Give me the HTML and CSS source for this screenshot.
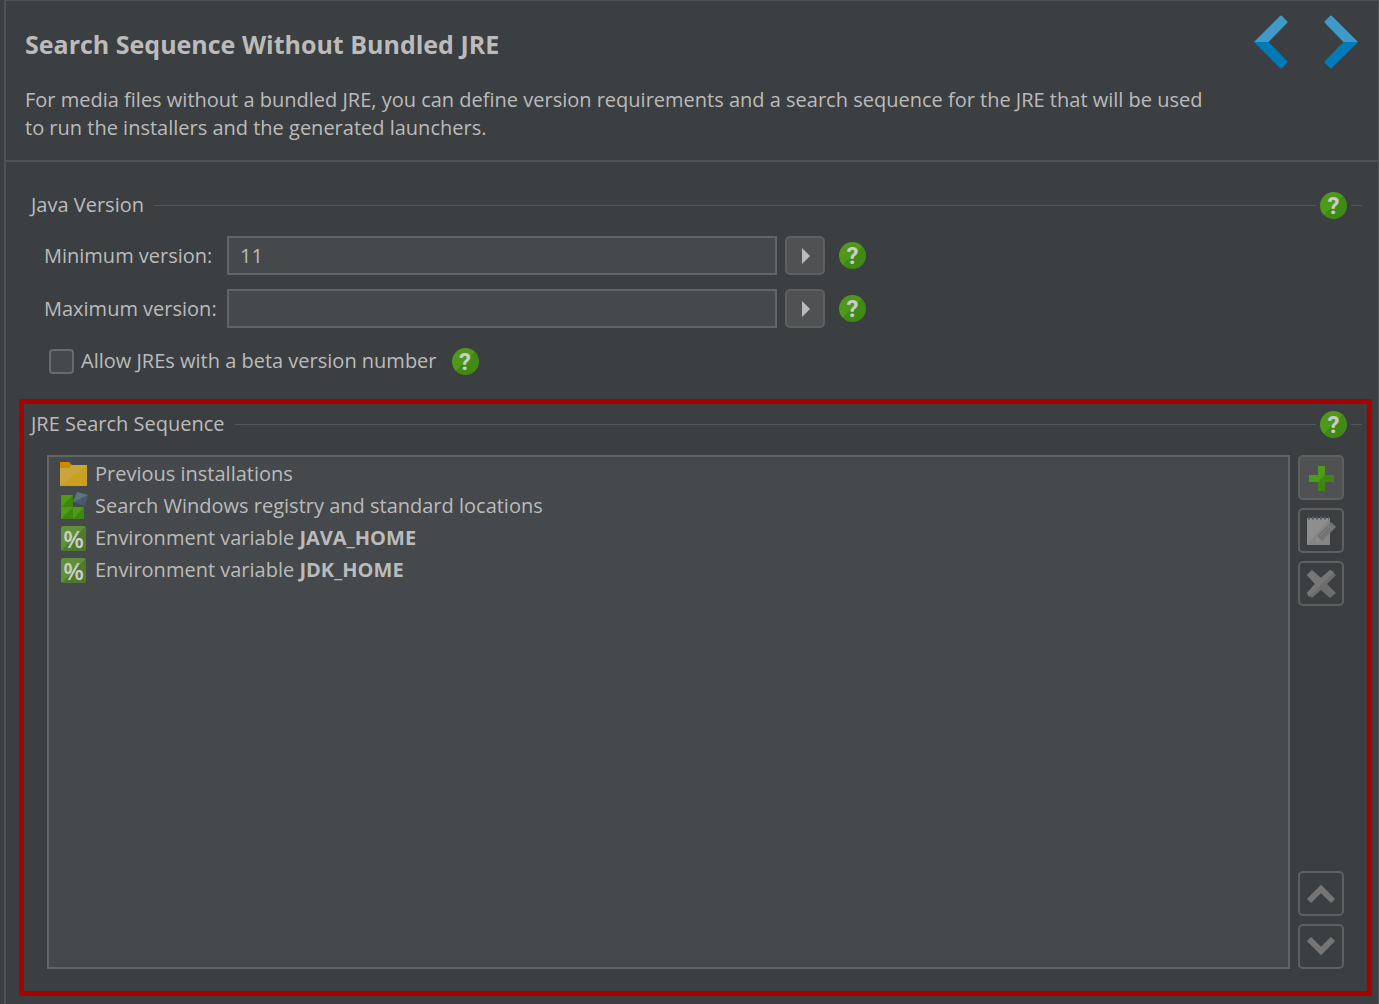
FILE: index.html
```html
<!DOCTYPE html>
<html lang="en">
<head>
    <meta charset="UTF-8">
    <meta name="viewport" content="width=device-width, initial-scale=1.0">
    <title>Search Sequence Without Bundled JRE</title>
    <link rel="stylesheet" href="styles.css">
</head>

<body>
    <main class="page">
        <header class="header">
            <div class="intro">
                <h1>Search Sequence Without Bundled JRE</h1>
                <p>For media files without a bundled JRE, you can define version requirements and a search sequence for the JRE that will be used to run the installers and the generated launchers.</p>
            </div>
            <nav class="steps">
                <button type="button" class="step" aria-label="Previous step">
                    <svg width="34" height="54" viewBox="0 0 34 54">
                        <path d="M0 27 26 1q1-1 2 0l5 5q1 1 0 2L14.500 27Z" fill="#3f9ac9"/>
                        <path d="M0 27 26 53q1 1 2 0l5-5q1-1 0-2L14.500 27Z" fill="#007bb8"/>
                    </svg>
                </button>
                <button type="button" class="step" aria-label="Next step">
                    <svg width="34" height="54" viewBox="0 0 34 54">
                        <path d="M34 27 8 1q-1-1-2 0L1 6q-1 1 0 2l18.500 19Z" fill="#3f9ac9"/>
                        <path d="M34 27 8 53q-1 1-2 0l-5-5q-1-1 0-2l18.500-19Z" fill="#007bb8"/>
                    </svg>
                </button>
            </nav>
        </header>

        <section class="version">
            <div class="section-title">
                <h2>Java Version</h2>
                <button type="button" class="help">?</button>
            </div>
            <form class="fields">
                <div class="field">
                    <label for="minVersion">Minimum version:</label>
                    <input type="text" id="minVersion" value="11">
                    <button type="button" class="choose" aria-label="Choose minimum version"><svg width="8" height="16" viewBox="0 0 8 16"><path d="M0 0 8 8 0 16Z" fill="#bbb"/></svg></button>
                    <button type="button" class="help">?</button>
                </div>
                <div class="field">
                    <label for="maxVersion">Maximum version:</label>
                    <input type="text" id="maxVersion">
                    <button type="button" class="choose" aria-label="Choose maximum version"><svg width="8" height="16" viewBox="0 0 8 16"><path d="M0 0 8 8 0 16Z" fill="#bbb"/></svg></button>
                    <button type="button" class="help">?</button>
                </div>
                <div class="check">
                    <input type="checkbox" id="allowBeta">
                    <label for="allowBeta">Allow JREs with a beta version number</label>
                    <button type="button" class="help">?</button>
                </div>
            </form>
        </section>

        <section class="sequence">
            <div class="section-title">
                <h2>JRE Search Sequence</h2>
                <button type="button" class="help">?</button>
            </div>
            <div class="sequence-body">
                <ul class="entries">
                    <li>
                        <svg width="28" height="28" viewBox="0 0 28 28">
                            <path d="M0 2h9l3 3h15v5H0Z" fill="#cc8a00"/>
                            <path d="M0 8h9l3-3h15v21H0Z" fill="#c9a01f"/>
                            <path d="M0 8h9l3-3h15L0 26Z" fill="#c9a53c"/>
                        </svg>
                        <span>Previous installations</span>
                    </li>
                    <li>
                        <svg width="28" height="28" viewBox="0 0 28 28">
                            <path d="M1 3h12v12h11v12H1Z" fill="#3f8512"/>
                            <path d="M1 3h12L1 15ZM1 15h12L1 27ZM13 15h11L13 27Z" fill="#4f9a17"/>
                            <path d="M17 0 28 3 25 14 13 10Z" fill="#465c6a"/>
                            <path d="M17 0 28 3 13 10Z" fill="#5f7480"/>
                        </svg>
                        <span>Search Windows registry and standard locations</span>
                    </li>
                    <li>
                        <span class="percent">%</span>
                        <span>Environment variable <b>JAVA_HOME</b></span>
                    </li>
                    <li>
                        <span class="percent">%</span>
                        <span>Environment variable <b>JDK_HOME</b></span>
                    </li>
                </ul>
                <div class="tools">
                    <button type="button" class="tool" aria-label="Add">
                        <svg width="30" height="30" viewBox="0 0 30 30">
                            <path d="M12 3h7v9h9v7h-9v9h-7v-9H3v-7h9Z" fill="#3f8512"/>
                            <path d="M12 3h7v9L12 19H3v-7h9Z" fill="#509a1b"/>
                        </svg>
                    </button>
                    <button type="button" class="tool" aria-label="Edit" disabled>
                        <svg width="30" height="30" viewBox="0 0 30 30">
                            <path d="M1 2h23v27H1Z" fill="#858585"/>
                            <path d="M1 29V2h23Z" fill="#8e8e8e"/>
                            <path d="M2 2h21" stroke="#5a5a5a" stroke-width="3" stroke-dasharray="2 2"/>
                            <path d="m9 27 2-7L25 6l5 5-14 14Z" fill="#747474"/>
                            <path d="m9 27 2-7 5 5Z" fill="#8c8c8c"/>
                            <path d="m14 20 9-9M22 9l5 5" stroke="#808080" stroke-width="1"/>
                        </svg>
                    </button>
                    <button type="button" class="tool" aria-label="Remove" disabled>
                        <svg width="30" height="30" viewBox="0 0 30 30">
                            <path d="m6 1 9 8 9-8 6 5-9 9 9 9-6 5-9-8-9 8-5-5 8-9-8-9Z" fill="#6d6d6d"/>
                            <path d="m6 1 9 8 9-8 4 2L3 28l-2-4 8-9-8-9Z" fill="#777"/>
                        </svg>
                    </button>
                    <button type="button" class="tool move-up" aria-label="Move up" disabled>
                        <svg width="30" height="20" viewBox="0 0 30 20">
                            <path d="m3 17 12-12 12 12" fill="none" stroke="#757575" stroke-width="6"/>
                        </svg>
                    </button>
                    <button type="button" class="tool" aria-label="Move down" disabled>
                        <svg width="30" height="20" viewBox="0 0 30 20">
                            <path d="m3 2 12 12L27 2" fill="none" stroke="#757575" stroke-width="6"/>
                        </svg>
                    </button>
                </div>
            </div>
        </section>
    </main>
</body>
</html>
```
FILE: styles.css
```css
* {
    box-sizing: border-box;
}
body {
    margin: 0;
    font-family: "Open Sans", "Noto Sans", sans-serif;
    font-size: 20px;
    line-height: 28px;
    color: #bbb;
    background-color: #3c3f41;
}
h1, h2, p, ul {
    margin: 0;
    padding: 0;
}
button {
    padding: 0;
    border: none;
    background: none;
    cursor: pointer;
}
svg {
    display: block;
}
.page {
    display: flex;
    flex-direction: column;
    min-height: 100vh;
    padding-bottom: 8px;
    border: solid #505355;
    border-width: 1px 1px 0 2px;
    margin-left: 4px;
}

/* title bar */
.header {
    display: flex;
    justify-content: space-between;
    gap: 36px;
    padding: 14px 20px 18px 19px;
    border-bottom: 2px solid #505355;
}
h1 {
    padding-top: 15px;
    font-size: 25px;
    font-weight: bold;
}
.intro p {
    padding-top: 28px;
}
.steps {
    display: flex;
    gap: 36px;
    align-items: flex-start;
}

/* section headings */
.section-title {
    display: flex;
    align-items: center;
    gap: 4px;
}
.section-title h2 {
    order: -1;
    margin-right: 6px;
    font-size: 20px;
    font-weight: normal;
}
.section-title::before,
.section-title::after {
    content: "";
    height: 1px;
    background-color: #55585a;
}
.section-title::before {
    flex: 1;
}
.section-title::after {
    width: 11px;
}
.help {
    width: 27px;
    height: 27px;
    border-radius: 50%;
    font: bold 24px/28px Roboto, sans-serif;
    color: #ccc;
    background: linear-gradient(135deg, #50981a 50%, #3f8a14 50%);
}

/* java version */
.version {
    padding: 29px 16px 24px 25px;
}
.fields {
    display: flex;
    flex-direction: column;
    gap: 14px;
    padding: 17px 0 0 13px;
}
.field {
    display: flex;
    align-items: center;
}
.field label {
    width: 183px;
}
.field input {
    width: 550px;
    height: 39px;
    padding: 0 11px;
    border: 2px solid #646464;
    font: inherit;
    color: inherit;
    background-color: #45494b;
}
.choose {
    display: flex;
    align-items: center;
    justify-content: center;
    width: 40px;
    height: 39px;
    margin: 0 14px 0 8px;
    padding-left: 2px;
    border: 2px solid #5e6060;
    border-radius: 5px;
    background-color: #4f5152;
}
.check {
    display: flex;
    align-items: center;
    padding: 5px 0 0 5px;
}
.check input {
    appearance: none;
    width: 25px;
    height: 25px;
    margin: 0 7px 0 0;
    border: 2px solid #6b6b6b;
    border-radius: 4px;
    background-color: #45494b;
}
.check .help {
    margin-left: 15px;
}

/* search sequence */
.sequence {
    display: flex;
    flex: 1;
    flex-direction: column;
    margin: 0 6px 0 13px;
    padding: 6px 5px 22px 7px;
    border: 5px solid #ab0000;
}
.sequence-body {
    display: flex;
    flex: 1;
    gap: 8px;
    padding: 17px 18px 0 16px;
}
.entries {
    flex: 1;
    padding: 1px 11px;
    border: 2px solid #646464;
    list-style: none;
    background-color: #45494b;
}
.entries li {
    display: flex;
    align-items: center;
    gap: 7px;
    height: 32px;
}
.percent {
    width: 25px;
    height: 25px;
    margin: 0 2px 0 1px;
    border-radius: 2px;
    font: 600 24px/25px "Open Sans", sans-serif;
    text-align: center;
    color: #ccc;
    background: linear-gradient(135deg, #5f8f37 50%, #4e7a2c 50%);
}
.tools {
    display: flex;
    flex-direction: column;
    gap: 8px;
}
.tool {
    display: flex;
    align-items: center;
    justify-content: center;
    width: 46px;
    height: 45px;
    border: 2px solid #5e6060;
    border-radius: 5px;
    background-color: #4f5152;
}
.tool:disabled {
    background-color: transparent;
    cursor: default;
}
.move-up {
    margin-top: auto;
}
```
